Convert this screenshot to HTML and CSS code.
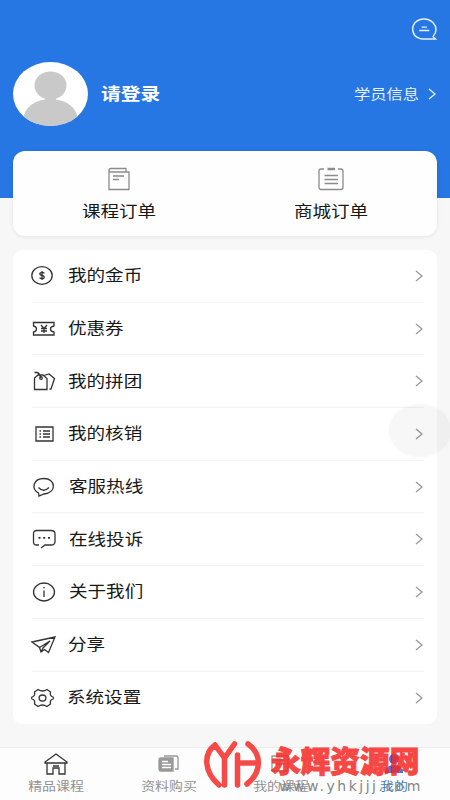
FILE: index.html
```html
<!DOCTYPE html>
<html lang="zh-CN">
<head>
<meta charset="utf-8">
<title>我的</title>
<link rel="stylesheet" href="styles.css">
</head>
<body>
<main class="screen">
  <header class="hero">
    <svg class="message" viewBox="0 0 28 24"><path d="M23 19C27 15 27 9 23 5C18-.3 9-.3 4 5C-.5 11 2 18 7 20.500Q10 22 13 22H25.500L22.500 19"/><path d="M11 9.500H16.500M8.500 13H19"/></svg>
    <div class="profile">
      <svg class="avatar" viewBox="0 0 75 64"><defs><clipPath id="oval"><ellipse cx="37.500" cy="32" rx="37.500" ry="32"/></clipPath></defs><g clip-path="url(#oval)"><rect width="75" height="64" fill="#fff"/><g fill="#c9c9c9"><ellipse cx="37.500" cy="23.500" rx="16" ry="14"/><path d="M32 35H43V39H32Z"/><ellipse cx="37.500" cy="57" rx="27" ry="20"/></g></g></svg>
      <b class="login"><span class="wide">请登录</span></b>
      <span class="student"><span class="wide">学员信息</span></span>
      <svg class="arrow light" viewBox="0 0 8 12"><path d="M1 1L7 6L1 11"/></svg>
    </div>
  </header>
  <section class="orders">
    <div class="order"><svg viewBox="0 0 26 24"><path d="M3 4V22.500H23V5H5Q3 5 3 3Q3 1.500 5 1.500H20V5M7 9H18M7 12.500H13"/></svg><span class="wide">课程订单</span></div>
    <div class="order"><svg viewBox="0 0 26 24"><path d="M6 2H3Q1 2 1 4V20Q1 22.500 3 22.500H23Q25 22.500 25 20V4Q25 2 23 2H20M6.500 8.500H20M6.500 12.500H20M6.500 16.500H20"/><path class="clip" d="M9.500 2H17"/></svg><span class="wide">商城订单</span></div>
  </section>
  <section class="menu">
    <div class="row"><svg class="icon coin" viewBox="0 0 24 20"><ellipse cx="11" cy="9.500" rx="10.200" ry="8.800"/><path d="M13.500 7.300Q11 5.600 9 7.200Q8.200 9 11 9.500Q14 10 13 12Q11 13.500 8.500 11.800M11 5V14"/></svg><span class="wide">我的金币</span><svg class="arrow" viewBox="0 0 8 12"><path d="M1 1L7 6L1 11"/></svg></div>
    <div class="row"><svg class="icon" viewBox="0 0 24 20"><path d="M1.500 3.500H22V7Q18.500 7.500 18.500 10T22 13V16H1.500V13Q4.500 12.500 4.500 10T1.500 7ZM9 6L12 9.500L15 6M12 9.500V14M9 9.500H15M9 12H15"/></svg><span class="wide">优惠券</span><svg class="arrow" viewBox="0 0 8 12"><path d="M1 1L7 6L1 11"/></svg></div>
    <div class="row"><svg class="icon" viewBox="0 0 24 20"><path d="M2.500 18.500V7L6 4H11L15 7.500V18.500ZM2.500 1.500H5Q7.500 2 9 7M12 4.500L17 3L22.500 7.500L19 18H17.500"/><circle cx="9" cy="7" r="1.300"/></svg><span class="wide">我的拼团</span><svg class="arrow" viewBox="0 0 8 12"><path d="M1 1L7 6L1 11"/></svg></div>
    <div class="row"><svg class="icon" viewBox="0 0 24 20"><path d="M4 3H21V17H4ZM7.500 7H9M11 7H18M7.500 10H9M11 10H18M7.500 13H9M11 13H18"/></svg><span class="wide">我的核销</span><svg class="arrow" viewBox="0 0 8 12"><path d="M1 1L7 6L1 11"/></svg><i class="touch"></i></div>
    <div class="row"><svg class="icon" viewBox="0 0 24 20"><path d="M6.500 16C-1 12 1 1.500 12 1.500C24 1.500 25 16 12 17Q9.500 18 7 19ZM6.500 10.500Q11.500 16 17 10.500"/></svg><span class="wide nudge">客服热线</span><svg class="arrow" viewBox="0 0 8 12"><path d="M1 1L7 6L1 11"/></svg></div>
    <div class="row"><svg class="icon" viewBox="0 0 24 20"><path d="M7 16H4.500Q1.500 16 1.500 13V4.500Q1.500 1.500 5 1.500H19Q23 1.500 23 5V12.500Q23 16 19 16H13L9 19"/><path class="dots" d="M6.500 8.800H8.500M11.200 8.800H13.200M16 8.800H18"/></svg><span class="wide nudge">在线投诉</span><svg class="arrow" viewBox="0 0 8 12"><path d="M1 1L7 6L1 11"/></svg></div>
    <div class="row"><svg class="icon" viewBox="0 0 24 20"><ellipse cx="12" cy="10" rx="10.500" ry="9"/><path d="M12 8.500V15M12 5V6.500"/></svg><span class="wide nudge">关于我们</span><svg class="arrow" viewBox="0 0 8 12"><path d="M1 1L7 6L1 11"/></svg></div>
    <div class="row"><svg class="icon" viewBox="0 0 24 20"><path d="M0 7L23 2L16.500 17.500L12.500 14.500L9 17L7.500 12.500ZM7.500 12.500L18 6L11 13L9 17"/></svg><span class="wide">分享</span><svg class="arrow" viewBox="0 0 8 12"><path d="M1 1L7 6L1 11"/></svg></div>
    <div class="row"><svg class="icon coin" viewBox="0 0 24 20"><path d="M7 1.500Q11.500 4.500 16 1.500L19.500 4Q18.500 8 22 9Q23 10 22 11Q18.500 12 19.500 16L16 18.500Q11.500 15.500 7 18.500L3.500 16Q4.500 12 1 11Q0 10 1 9Q4.500 8 3.500 4Z"/><ellipse cx="11.500" cy="10" rx="3.400" ry="3"/></svg><span class="wide back">系统设置</span><svg class="arrow" viewBox="0 0 8 12"><path d="M1 1L7 6L1 11"/></svg></div>
  </section>
  <nav class="tabs">
    <div class="tab"><svg viewBox="0 0 24 22"><path d="M1 9L12 1L23 9V10H1ZM3 10V21H9V15H15V21H21V10M9 13H15"/></svg><span class="wide">精品课程</span></div>
    <div class="tab books"><svg viewBox="0 0 24 22"><path class="solid" d="M4 5H16V18H4Q2 18 2 16V7Q2 5 4 5Z"/><path d="M7 3H19Q21 3 21 5V16H18"/><path class="lines" d="M5 8.500H11M5 11.500H14M5 14.500H14"/></svg><span class="wide">资料购买</span></div>
    <div class="tab books"><svg viewBox="0 0 24 22"><path d="M3 3H19V18H3ZM6 7H16M6 11H16"/></svg><span class="wide">我的课程</span></div>
    <div class="tab active"><svg viewBox="0 0 24 22"><circle cx="12" cy="6" r="5"/><path d="M3 20Q3 12 12 12T21 20Z"/></svg><span class="wide">我的</span></div>
  </nav>
  <div class="watermark">
    <svg class="logo" viewBox="0 0 58 50"><path d="M11 6C-1 15 0 33 15 46M11 6L20.500 19L30.500 5M20.500 19V46M33.500 16V46M33.500 24H53M44 5C58 15 58 33 43 45"/></svg>
    <div class="brand"><b>永辉资源网</b><span>www.yhkjjj.com</span></div>
  </div>
</main>
</body>
</html>
```
FILE: styles.css
```css
* { box-sizing: border-box; }
body { margin: 0; font-family: "Noto Sans CJK SC", sans-serif; color: #181818; }
svg { display: block; flex: none; fill: none; stroke: #333; stroke-width: 1.3; overflow: visible; }
.screen { position: relative; width: 450px; height: 800px; overflow: hidden; background: #f7f7f7; display: flex; flex-direction: column; }
.wide { display: block; white-space: nowrap; transform: scaleX(1.16); transform-origin: left; }
.hero { height: 198px; flex: none; background: #2676e3; padding: 18px 12px 0 13px; }
.message { width: 27px; height: 23px; margin-left: auto; stroke: #e8f2ff; stroke-width: 1.5; }
.profile { display: flex; align-items: center; margin-top: 21px; }
.avatar { width: 75px; height: 64px; stroke: none; }
.login { margin-left: 13px; width: 62px; font-size: 17px; line-height: 24px; padding-bottom: 3px; color: #fff; }
.student { margin-left: auto; width: 66px; font-size: 14px; line-height: 20px; padding-bottom: 3px; color: #e6f0ff; }
.arrow { width: 8px; height: 12px; margin: 0 1px 0 auto; stroke: #999; }
.arrow.light { stroke: #e6f0ff; margin: 0 2px 0 8px; }
.orders { height: 85px; flex: none; margin: -47px 13px 0; border-radius: 12px; background: #fefefe; box-shadow: 0 1px 4px #00000014; display: flex; }
.order { flex: 1; padding-top: 16px; display: flex; flex-direction: column; align-items: center; font-size: 16px; line-height: 24px; }
.order svg { width: 26px; height: 24px; stroke: #8c8c8c; margin-bottom: 7px; }
.order .wide { transform-origin: center; position: relative; left: 0.5px; }
.order .clip { stroke-width: 2.5; }
.menu { height: 474px; flex: none; margin: 14px 13px 0; border-radius: 9px; background: #fff; padding: 0 13px 0 19px; }
.row { position: relative; height: 52.7px; display: flex; align-items: center; border-bottom: 1px solid #f3f3f3; font-size: 16px; line-height: 24px; }
.row .wide { padding-bottom: 3px; }
.row:last-child { border: 0; }
.icon { width: 24px; height: 20px; margin-right: 12px; }
.icon.coin { margin-left: -1px; margin-right: 13px; }
.dots { stroke-width: 1.8; }
.row .nudge { margin-left: 1px; }
.row .back { margin-left: -1px; }
.touch { position: absolute; right: -27px; top: -4px; width: 62px; height: 53px; border-radius: 50%; background: #00000008; box-shadow: 0 0 3px #00000008; }
.tabs { margin-top: auto; height: 53px; flex: none; background: #fdfdfd; border-top: 1px solid #ececec; display: flex; color: #929292; font-size: 12px; line-height: 18px; }
.tab { flex: 1; display: flex; flex-direction: column; align-items: center; padding-top: 5px; }
.tab svg { width: 24px; height: 22px; margin-bottom: 2px; }
.tab .wide { transform-origin: center; }
.books svg { stroke: #999; }
.books .solid { fill: #999; }
.books .lines { stroke: #fff; }
.active { color: #4480bf; }
.active svg { fill: #3978dc; stroke: none; }
.watermark { position: absolute; left: 204px; top: 739px; display: flex; }
.logo { width: 58px; height: 50px; stroke: #f64a47; stroke-width: 5.5; stroke-linecap: round; stroke-linejoin: round; }
.brand { margin-left: 9px; width: 152px; }
.brand b { display: block; height: 38px; font-size: 29.7px; line-height: 41px; font-weight: 900; white-space: nowrap; color: #f52a27; opacity: .86; -webkit-text-stroke: 1px #f52a27; }
.brand span { display: block; margin-left: 8px; font: 14px/18px "DejaVu Sans", sans-serif; letter-spacing: 2.5px; white-space: nowrap; color: #858585; }
```
